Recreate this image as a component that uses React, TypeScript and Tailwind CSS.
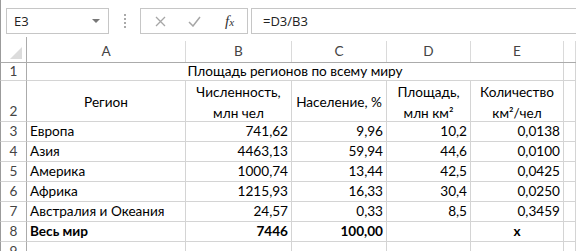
import React from 'react';

type Row = {
  n: number;
  region: string;
  pop: string;
  share: string;
  area: string;
  ratio: string;
  bold?: boolean;
};

const rows: Row[] = [
  { n: 3, region: 'Европа', pop: '741,62', share: '9,96', area: '10,2', ratio: '0,0138' },
  { n: 4, region: 'Азия', pop: '4463,13', share: '59,94', area: '44,6', ratio: '0,0100' },
  { n: 5, region: 'Америка', pop: '1000,74', share: '13,44', area: '42,5', ratio: '0,0425' },
  { n: 6, region: 'Африка', pop: '1215,93', share: '16,33', area: '30,4', ratio: '0,0250' },
  { n: 7, region: 'Австралия и Океания', pop: '24,57', share: '0,33', area: '8,5', ratio: '0,3459' },
  { n: 8, region: 'Весь мир', pop: '7446', share: '100,00', area: '', ratio: 'x', bold: true },
];

const grid = 'grid grid-cols-[27px_159px_106px_95px_84px_93px_1fr]';
const cell = 'border-r border-b border-[#d4d4d4] px-[3px] overflow-hidden whitespace-nowrap';
const rowHead = 'border-l border-l-[#9b9b9b] border-r border-r-[#ababab] border-b border-b-[#d4d4d4] text-[#444] flex justify-center';

export default function App() {
  return (
    <div className="w-[576px] h-[251px] overflow-hidden bg-white text-black font-['Lato',sans-serif] text-[13.6px] leading-none">
      {/* formula bar */}
      <div className="h-[37px] flex items-start pt-[8px] border-l border-[#9b9b9b]">
        <div className="ml-[5px] w-[103px] h-[26px] border border-[#c6c6c6] flex items-center justify-between pl-[7px] pr-[8px] font-['Open_Sans',sans-serif] text-[13px] text-[#222]">
          <span>E3</span>
          <span className="w-0 h-0 border-l-[4px] border-r-[4px] border-t-[4px] border-l-transparent border-r-transparent border-t-[#777]" />
        </div>
        <div className="w-[31px] h-[26px] flex flex-col items-center justify-center gap-[2px]">
          <span className="w-[2px] h-[2px] bg-[#aaa]" />
          <span className="w-[2px] h-[2px] bg-[#aaa]" />
          <span className="w-[2px] h-[2px] bg-[#aaa]" />
          <span className="w-[2px] h-[2px] bg-[#aaa]" />
        </div>
        <div className="w-[108px] h-[26px] border border-[#c6c6c6] flex items-center pl-[14px] gap-[22px]">
          <svg width="11" height="11" viewBox="0 0 11 11">
            <path d="M1 1 L10 10 M10 1 L1 10" stroke="#a6a6a6" strokeWidth="1.3" fill="none" />
          </svg>
          <svg width="13" height="11" viewBox="0 0 13 11">
            <path d="M1 6 L5 10 L12 1" stroke="#a6a6a6" strokeWidth="1.5" fill="none" />
          </svg>
          <span className="font-['Liberation_Serif',serif] italic text-[15px] text-[#333] ml-[2px]">
            f<span className="text-[11px]">x</span>
          </span>
        </div>
        <div className="ml-[3px] flex-1 h-[26px] border-y border-l border-[#c6c6c6] flex items-center pl-[11px] font-['Open_Sans',sans-serif] text-[13px] text-[#222]">
          =D3/B3
        </div>
      </div>

      {/* column headers */}
      <div className={`${grid} h-[26px]`}>
        <div className="border-l border-l-[#9b9b9b] border-r border-r-[#ababab] border-b border-b-[#ababab] relative">
          <svg className="absolute right-[4px] bottom-[3px]" width="12" height="12" viewBox="0 0 12 12">
            <path d="M12 0 L12 12 L0 12 Z" fill="#dcdcdc" />
          </svg>
        </div>
        {['A', 'B', 'C', 'D', 'E', ''].map((c, i) => (
          <div key={i} className="border-b border-b-[#ababab] flex items-end">
            <div className="flex-1 text-center text-[#444] pb-[3px]">{c}</div>
            <div className="w-px h-[21px] bg-[#dadada]" />
          </div>
        ))}
      </div>

      {/* row 1 */}
      <div className={`${grid} h-[18px]`}>
        <div className={`${rowHead} items-end pb-[1px]`}>1</div>
        <div className={`${cell} col-span-5 flex items-end justify-center pb-[1px]`}>
          Площадь регионов по всему миру
        </div>
        <div className={cell} />
      </div>

      {/* row 2 */}
      <div className={`${grid} h-[41px]`}>
        <div className={`${rowHead} items-end pb-[2px]`}>2</div>
        <div className={`${cell} flex items-center justify-center pt-[3px]`}>Регион</div>
        <div className={`${cell} flex flex-col items-center justify-center gap-[7px] pt-[5px]`}>
          <span>Численность,</span>
          <span>млн чел</span>
        </div>
        <div className={`${cell} flex items-center justify-center pt-[3px]`}>Население, %</div>
        <div className={`${cell} flex flex-col items-center justify-center gap-[7px] pt-[5px]`}>
          <span>Площадь,</span>
          <span>млн км²</span>
        </div>
        <div className={`${cell} flex flex-col items-center justify-center gap-[7px] pt-[5px]`}>
          <span>Количество</span>
          <span>км²/чел</span>
        </div>
        <div className={cell} />
      </div>

      {/* data rows */}
      {rows.map((r) => (
        <div key={r.n} className={`${grid} h-[20px]`}>
          <div className={`${rowHead} items-end pb-[2px]`}>{r.n}</div>
          <div className={`${cell} flex items-end pb-[2px] ${r.bold ? 'font-bold' : ''}`}>{r.region}</div>
          <div className={`${cell} flex items-end justify-end pb-[2px] ${r.bold ? 'font-bold' : ''}`}>{r.pop}</div>
          <div className={`${cell} flex items-end justify-end pb-[2px] ${r.bold ? 'font-bold' : ''}`}>{r.share}</div>
          <div className={`${cell} flex items-end justify-end pb-[2px]`}>{r.area}</div>
          <div
            className={`${cell} flex items-end pb-[2px] ${r.bold ? 'font-bold justify-center' : 'justify-end'}`}
          >
            {r.ratio}
          </div>
          <div className={cell} />
        </div>
      ))}

      {/* row 9 */}
      <div className={`${grid} h-[20px]`}>
        <div className={`${rowHead} items-end pb-[2px]`}>9</div>
        <div className={cell} />
        <div className={cell} />
        <div className={cell} />
        <div className={cell} />
        <div className={cell} />
        <div className={cell} />
      </div>
    </div>
  );
}
